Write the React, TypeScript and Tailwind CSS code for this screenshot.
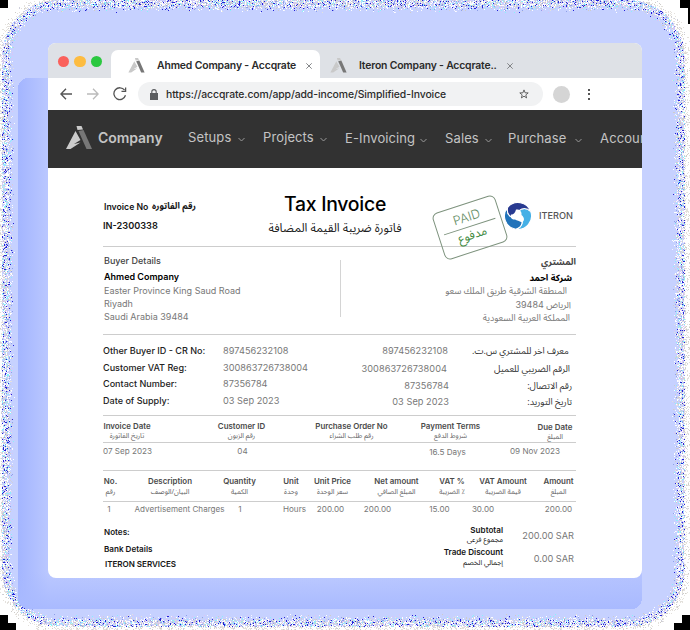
import React from "react";

const inter = "font-['Inter','Liberation_Sans',sans-serif]";
const arabic = "font-['Noto_Sans_Arabic','DejaVu_Sans',sans-serif]";

type TextProps = { className?: string; children: React.ReactNode };

const Ar = ({ className = "", children }: TextProps) => (
  <div dir="rtl" className={`${arabic} whitespace-nowrap ${className}`}>{children}</div>
);
const Line = () => <div className="h-px w-[473px] shrink-0 bg-[#cdcdcd]" />;

// Deterministic speckle along the rounded border of the backdrop.
function speckles() {
  let seed = 1234567;
  const rnd = () => {
    seed = (seed * 1664525 + 1013904223) >>> 0;
    return seed / 4294967296;
  };
  const colours = ["#ffffff", "#ffffff", "#ffffff", "#e4e1dc", "#cfcdca", "#cfd0dc", "#8fa0e8", "#2422d8", "#8af2fb", "#dcc4f4", "#f4f4ff"];
  const paths = colours.map(() => "");
  for (let y = 0; y < 630; y++) {
    for (let x = 0; x < 690; x++) {
      const r = 56;
      const qx = Math.abs(x - 343) - (341 - r);
      const qy = Math.abs(y - 313) - (313 - r);
      const d = Math.hypot(Math.max(qx, 0), Math.max(qy, 0)) + Math.min(Math.max(qx, qy), 0) - r;
      if (d < -13 || d > 7) continue;
      const p = d > 0 ? 0.5 - d * 0.05 : d > -5 ? 0.8 : 0.8 * Math.pow((d + 13) / 8, 2);
      if (rnd() < p) {
        let i = Math.floor(rnd() * colours.length);
        if (d > 0 && i > 5) i = 3;
        paths[i] += `M${x} ${y}h1v1h-1z`;
      }
    }
  }
  return paths.map((d, i) => ({ d, fill: colours[i] }));
}
const grain = speckles();

const Backdrop = () => (
  <svg className="absolute inset-0" width="690" height="630" shapeRendering="crispEdges">
    <defs>
      <linearGradient id="side" x1="0" x2="1" y1="0" y2="0">
        <stop offset="0" stopColor="#a3b5ff" />
        <stop offset="0.05" stopColor="#bbc8ff" />
        <stop offset="0.5" stopColor="#bdcaff" />
        <stop offset="1" stopColor="#b6c4ff" />
      </linearGradient>
      <linearGradient id="foot" x1="0" x2="0" y1="0" y2="1">
        <stop offset="0.93" stopColor="#a9baff" stopOpacity="0" />
        <stop offset="1" stopColor="#a9baff" />
      </linearGradient>
    </defs>
    <rect x="2" y="0" width="682" height="626" rx="56" fill="#c6d1ff" />
    {grain.map((g, i) => <path key={i} d={g.d} fill={g.fill} />)}
    <rect x="18" y="78" width="624" height="531" rx="10" fill="url(#side)" />
    <rect x="18" y="78" width="624" height="531" rx="10" fill="url(#foot)" />
    <path d="M0 0h8v8h-8zM680 0h10v24h-2v-16h-8zM0 615h8v8h8v7h-16zM682 615h8v15h-16v-7h8z" fill="#000" />
  </svg>
);

const Logo = ({ className = "", light = "#c9c9c9", dark = "#777777" }: { className?: string; light?: string; dark?: string }) => (
  <svg className={`shrink-0 ${className}`} viewBox="0 0 26 24">
    <path d="M10.5 0h5l1.5 3.6-5.5.4z" fill={light} />
    <path d="M9.5 5l5 9-6.500 4 6.500-1.500-10 6.500H0z" fill={light} />
    <path d="M12.500 5l5-1 8.500 19h-5.500z" fill={dark} />
  </svg>
);

const Close = ({ className = "" }: { className?: string }) => (
  <svg className={`h-[6px] w-[6px] shrink-0 ${className}`} viewBox="0 0 6 6" stroke="#77797c" strokeWidth="0.9"><path d="M.3.3l5.4 5.4M5.7.3L.3 5.7" /></svg>
);

const TabBar = () => (
  <div className="flex h-[35px] shrink-0 items-end bg-[#dee1e6]">
    <div className="mb-[11px] ml-[10px] flex gap-[5px]">
      <span className="h-[11px] w-[11px] rounded-full bg-[#fa615c]" />
      <span className="h-[11px] w-[12px] rounded-full bg-[#fdbc40]" />
      <span className="h-[11px] w-[11px] rounded-full bg-[#2bc840]" />
    </div>
    <div className="ml-[9px] flex h-[28px] w-[209px] items-center rounded-t-[7px] bg-white pl-[17px] pt-[3px]">
      <Logo className="h-[15px] w-[17px]" />
      <span className="ml-[12px] w-[139px] whitespace-nowrap text-[10.4px] font-semibold tracking-[-0.14px] text-[#2a2a2a]">Ahmed Company - Accqrate</span>
      <Close className="ml-[10px]" />
    </div>
    <div className="ml-[10px] flex h-[28px] items-center pt-[3px]">
      <Logo className="h-[15px] w-[17px]" />
      <span className="ml-[12px] w-[138px] whitespace-nowrap text-[10.4px] font-semibold tracking-[-0.18px] text-[#2a2a2a]">Iteron Company - Accqrate..</span>
      <Close className="ml-[10px]" />
    </div>
  </div>
);

const Toolbar = () => (
  <div className="flex h-[32px] shrink-0 items-center bg-white">
    <svg className="ml-[12px] h-[12px] w-[12px]" viewBox="0 0 12 12" fill="none" stroke="#555" strokeWidth="1.4"><path d="M12 6H1M6 .8L.9 6 6 11.2" /></svg>
    <svg className="ml-[15px] h-[12px] w-[12px]" viewBox="0 0 12 12" fill="none" stroke="#bbb" strokeWidth="1.3"><path d="M0 6h11M6 .8L11.1 6 6 11.2" /></svg>
    <svg className="ml-[14px] h-[14px] w-[14px]" viewBox="0 0 14 14" fill="none" stroke="#555" strokeWidth="1.3"><path d="M12.5 8.3A5.9 5.9 0 1 1 11.6 3.2" /><path d="M12.6.4v4H8.5" /></svg>
    <div className="ml-[11px] flex h-[24px] w-[405px] items-center rounded-full bg-[#f1f2f3]">
      <svg className="ml-[12px] h-[11px] w-[8px]" viewBox="0 0 8 11"><path d="M0 4h8v7H0z" fill="#5b5d60" /><path d="M1.8 4.3V2.8a2.2 2.2 0 0 1 4.4 0v1.5" fill="none" stroke="#5b5d60" strokeWidth="1.1" /></svg>
      <span className="ml-[8px] w-[280px] whitespace-nowrap pt-px text-[10.4px] font-medium tracking-[-0.08px] text-[#2b2b2b]">https://accqrate.com/app/add-income/Simplified-Invoice</span>
      <svg className="ml-[73px] h-[10px] w-[10px]" viewBox="0 0 10 10" fill="none" stroke="#555" strokeWidth="0.9"><path d="M5 .9l1.1 2.9 3.1.1-2.4 2 .8 3L5 7.2 2.4 8.9l.8-3L.8 3.9l3.1-.1z" /></svg>
    </div>
    <div className="ml-[10px] h-[17px] w-[17px] rounded-full bg-[#d5d5d5]" />
    <div className="ml-[18px] flex flex-col gap-[2.5px]">
      <span className="h-[2px] w-[2px] bg-[#555]" /><span className="h-[2px] w-[2px] bg-[#555]" /><span className="h-[2px] w-[2px] bg-[#555]" />
    </div>
  </div>
);

const nav = [
  { label: "Setups", item: "ml-[25.5px] -mt-[2px]", text: "w-[50px]", chev: true },
  { label: "Projects", item: "ml-[18px] -mt-[2px]", text: "w-[57px]", chev: true },
  { label: "E-Invoicing", item: "ml-[18px]", text: "w-[75px]", chev: true },
  { label: "Sales", item: "ml-[18px]", text: "w-[40px]", chev: true },
  { label: "Purchase", item: "ml-[16px]", text: "w-[67px]", chev: true },
  { label: "Accounting", item: "ml-[18px]", text: "w-[80px]", chev: false },
];

const NavBar = () => (
  <div className="flex h-[58px] shrink-0 items-center overflow-hidden bg-[#323232] text-[13px] tracking-[0.1px] text-[#c4c4c4]">
    <Logo className="-mt-[2px] ml-[18px] h-[24px] w-[26px]" light="#cbcbcb" />
    <span className="-mt-[4px] ml-[6px] w-[65px] whitespace-nowrap text-[14px] font-semibold tracking-[-0.05px]">Company</span>
    {nav.map((n) => (
      <div key={n.label} className={`flex shrink-0 items-center ${n.item}`}>
        <span className={`shrink-0 whitespace-nowrap ${n.text}`}>{n.label}</span>
        {n.chev && <svg className="mt-[2px] h-[5px] w-[7px]" viewBox="0 0 7 5" fill="none" stroke="#999" strokeWidth="1"><path d="M.5 1l3 3 3-3" /></svg>}
      </div>
    ))}
  </div>
);

const Stamp = () => (
  <div className="absolute left-[389px] top-[35px] flex h-[49px] w-[66px] -rotate-[18deg] flex-col items-center rounded-[6px] border border-[#7d927d] text-[#3f8a3f]">
    <span className="mt-[5px] text-[12.5px] font-light leading-[16px] text-[#668e66]">PAID</span>
    <div className="mt-px h-px w-[54px] shrink-0 bg-[#7d927d]" />
    <Ar className="text-[12px] leading-[18px]">مدفوع</Ar>
  </div>
);

const swirl = "M0 0C-1 -7 7 -10 12.7 -4.6A13.5 13.5 0 0 1 -2.35 13.3C5.16 11.06 6.56 2.63 0 0z";
const IteronMark = () => (
  <svg className="h-[28px] w-[28px]" viewBox="-14 -14 28 28" stroke="#fff" strokeWidth="1.1">
    <path d={swirl} fill="#45b0e6" />
    <path d={swirl} fill="#2173ba" transform="rotate(120)" />
    <path d={swirl} fill="#283a90" transform="rotate(240)" />
    <path d="M-2 -6.500C2 -7 4 -4 3.500 -1C7 2 6.500 5 4 6.500C1 4.500 -1 5 -3 3.500C-6.500 4 -8 1 -7 -1.500C-4 -1.500 -3 -3 -2 -6.500z" fill="#fff" stroke="none" />
  </svg>
);

const Header = () => (
  <div className="flex h-[78px] shrink-0">
    <div className="ml-px w-[163px] whitespace-nowrap pt-[31px] text-[8.7px] font-semibold leading-[16px] text-[#161616]">
      <div className="flex"><span className="w-[48px]">Invoice No</span><Ar className="text-[8.9px] font-bold">رقم الفاتوره</Ar></div>
      <div className="-ml-px mt-[3px] text-[9.2px]">IN-2300338</div>
    </div>
    <div className="flex w-[136px] flex-col items-center pt-[24px] text-black">
      <div className="whitespace-nowrap text-[19.4px] font-medium leading-[24px] tracking-[-0.25px]">Tax Invoice</div>
      <Ar className="mt-[3px] text-[12px] leading-[20px] text-[#222]">فاتورة ضريبة القيمة المضافة</Ar>
    </div>
    <div className="ml-[101px] mt-[34px] flex h-[28px] items-center">
      <IteronMark />
      <span className="ml-[7px] text-[9.2px] font-medium text-[#555]">ITERON</span>
    </div>
  </div>
);

const Parties = () => (
  <div className="flex h-[87px] shrink-0 whitespace-nowrap text-[9px] leading-[13px] text-[#777]">
    <div className="ml-px w-[236px] pt-[7px]">
      <div className="font-medium text-[#444]">Buyer Details</div>
      <div className="mt-[3px] font-semibold text-black">Ahmed Company</div>
      <div className="mt-px">Easter Province King Saud Road</div>
      <div>Riyadh</div>
      <div>Saudi Arabia 39484</div>
    </div>
    <div className="mt-[13px] h-[57px] w-px bg-[#d4d4d4]" />
    <div className="flex w-[235px] flex-col items-end pt-[9px]">
      <Ar className="text-[9px] font-bold text-[#444]">المشتري</Ar>
      <Ar className="mr-[4px] mt-[3px] text-[9px] font-bold text-black">شركة احمد</Ar>
      <Ar className="mr-[9px] text-[9.1px]">المنطقة الشرقية طريق الملك سعو</Ar>
      <Ar className="mr-[5px] text-[9px]">الرياض <span className={inter}>39484</span></Ar>
      <Ar className="mr-[6px] text-[9.1px]">المملكة العربية السعودية</Ar>
    </div>
  </div>
);

const ids = [
  { k: "Other Buyer ID - CR No:", v: "897456232108", ar: "معرف اخر للمشتري س.ت.", row: "mt-[9px]", right: "mr-[24px]", mr: "mr-[8px]", shift: "" },
  { k: "Customer VAT Reg:", v: "300863726738004", ar: "الرقم الضريبي للعميل", row: "mt-[3px]", right: "mr-[25px]", mr: "mr-[6px]", shift: "mt-px" },
  { k: "Contact Number:", v: "87356784", ar: "رقم الاتصال:", row: "mt-[2px]", right: "mr-[23px]", mr: "mr-[4px]", shift: "mt-[2px]" },
  { k: "Date of Supply:", v: "03 Sep 2023", ar: "تاريخ التوريد:", row: "mt-[3px]", right: "mr-[23px]", mr: "mr-[4px]", shift: "mt-px" },
];

const Identifiers = () => (
  <div className="h-[80px] w-[473px] shrink-0 whitespace-nowrap text-[9.2px] leading-[14px]">
    {ids.map((r) => (
      <div key={r.k} className={`flex h-[14px] ${r.row}`}>
        <span className="w-[120px] text-[9.05px] font-medium text-[#222]">{r.k}</span>
        <span className="w-[120px] tracking-[0.02px] text-[#777]">{r.v}</span>
        <span className={`ml-auto tracking-[0.05px] text-[#777] ${r.right} ${r.shift}`}>{r.v}</span>
        <div className={`flex w-[104px] ${r.shift}`}><Ar className={`ml-auto text-[9.1px] text-[#333] ${r.mr}`}>{r.ar}</Ar></div>
      </div>
    ))}
  </div>
);

type Col = { en: string; ar?: string; box: string };
const Heads = ({ cols, ar }: { cols: Col[]; ar: string }) => (
  <div className="flex whitespace-nowrap text-[7.9px] font-semibold leading-[11px] text-[#4a4a4a]">
    {cols.map((c, i) => (
      <div key={i} className={`flex shrink-0 flex-col items-center ${c.box}`}>
        <span>{c.en}</span>
        {c.ar && <Ar className={`text-[7px] font-normal text-[#666] ${ar}`}>{c.ar}</Ar>}
      </div>
    ))}
  </div>
);
const Values = ({ cols }: { cols: Col[] }) => (
  <div className="flex whitespace-nowrap text-[8.1px] leading-[11px] text-[#777]">
    {cols.map((c, i) => <div key={i} className={`flex shrink-0 justify-center ${c.box}`}>{c.en}</div>)}
  </div>
);

const datesHead: Col[] = [
  { en: "Invoice Date", ar: "تاريخ الفاتورة", box: "w-[48px]" },
  { en: "Customer ID", ar: "رقم الزبون", box: "ml-[66px] w-[49px]" },
  { en: "Purchase Order No", ar: "رقم طلب الشراء", box: "ml-[49px] w-[73px]" },
  { en: "Payment Terms", ar: "شروط الدفع", box: "ml-[32px] w-[61px]" },
  { en: "Due Date", ar: "المبلغ", box: "ml-[56px] w-[36px] mt-px" },
];
const datesRow: Col[] = [
  { en: "07 Sep 2023", box: "w-[49px]" },
  { en: "04", box: "ml-[85px] w-[11px]" },
  { en: "16.5 Days", box: "ml-[181px] w-[37px] mt-px" },
  { en: "09 Nov 2023", box: "ml-[44px] w-[50px]" },
];
const itemsHead: Col[] = [
  { en: "No.", ar: "رقم", box: "ml-px w-[13px]" },
  { en: "Description", ar: "البيان/الوصف", box: "ml-[31px] w-[44px]" },
  { en: "Quantity", ar: "الكمية", box: "ml-[31px] w-[33px]" },
  { en: "Unit", ar: "وحدة", box: "ml-[27px] w-[16px]" },
  { en: "Unit Price", ar: "سعر الوحدة", box: "ml-[14px] w-[39px]" },
  { en: "Net amount", ar: "المبلغ الصافي", box: "ml-[22px] w-[45px]" },
  { en: "VAT %", ar: "٪ الضريبة", box: "ml-[21px] w-[24px]" },
  { en: "VAT Amount", ar: "قيمة الضريبة", box: "ml-[15px] w-[48px]" },
  { en: "Amount", ar: "المبلغ", box: "ml-[16px] w-[31px]" },
];
const itemsRow: Col[] = [
  { en: "1", box: "ml-[4px] w-[4px]" },
  { en: "Advertisement Charges", box: "ml-[24px] w-[89px]" },
  { en: "1", box: "ml-[14px] w-[4px]" },
  { en: "Hours", box: "ml-[41px] w-[23px]" },
  { en: "200.00", box: "ml-[11px] w-[27px]" },
  { en: "200.00", box: "ml-[20px] w-[27px]" },
  { en: "15.00", box: "ml-[38px] w-[21px]" },
  { en: "30.00", box: "ml-[22px] w-[22px]" },
  { en: "200.00", box: "ml-[51px] w-[27px]" },
];

const Footer = () => (
  <div className="flex whitespace-nowrap text-[8.1px] font-semibold leading-[11px] text-[#161616]">
    <div className="ml-px w-[310px] pt-[11px]">
      <div>Notes:</div>
      <div className="mt-[6px]">Bank Details</div>
      <div className="ml-px mt-[4px] tracking-[-0.05px]">ITERON SERVICES</div>
    </div>
    <div className="flex w-[89px] flex-col items-end pt-[9px]">
      <div>Subtotal</div>
      <Ar className="-mt-[2px] text-[7.2px] font-normal">مجموع فرعى</Ar>
      <div className="mt-[2px]">Trade Discount</div>
      <Ar className="-mt-px text-[7.1px] font-normal">إجمالي الخصم</Ar>
    </div>
    <div className="flex w-[71px] flex-col items-end pt-[14px] text-[9.2px] font-normal leading-[12px] text-[#777]">
      <div>200.00 SAR</div>
      <div className="mt-[11px]">0.00 SAR</div>
    </div>
  </div>
);

export default function App() {
  return (
    <div className={`relative h-[630px] w-[690px] overflow-hidden bg-white ${inter}`}>
      <Backdrop />
      <div className="relative ml-[48px] pt-[43px]">
        <div className="flex h-[535px] w-[594px] flex-col overflow-hidden rounded-[8px] bg-white">
          <TabBar />
          <Toolbar />
          <NavBar />
          <div className="relative flex flex-1 flex-col pl-[55px]">
            <Header />
            <Line />
            <Parties />
            <Line />
            <Identifiers />
            <Line />
            <div className="h-[26px] shrink-0 pt-[5px]"><Heads cols={datesHead} ar="-mt-[2px]" /></div>
            <Line />
            <div className="h-[27px] shrink-0 pt-[3px]"><Values cols={datesRow} /></div>
            <Line />
            <div className="h-[30px] shrink-0 pt-[5px]"><Heads cols={itemsHead} ar="-mt-px" /></div>
            <Line />
            <div className="h-[14px] shrink-0 pt-[2px]"><Values cols={itemsRow} /></div>
            <Footer />
            <Stamp />
          </div>
        </div>
      </div>
    </div>
  );
}
